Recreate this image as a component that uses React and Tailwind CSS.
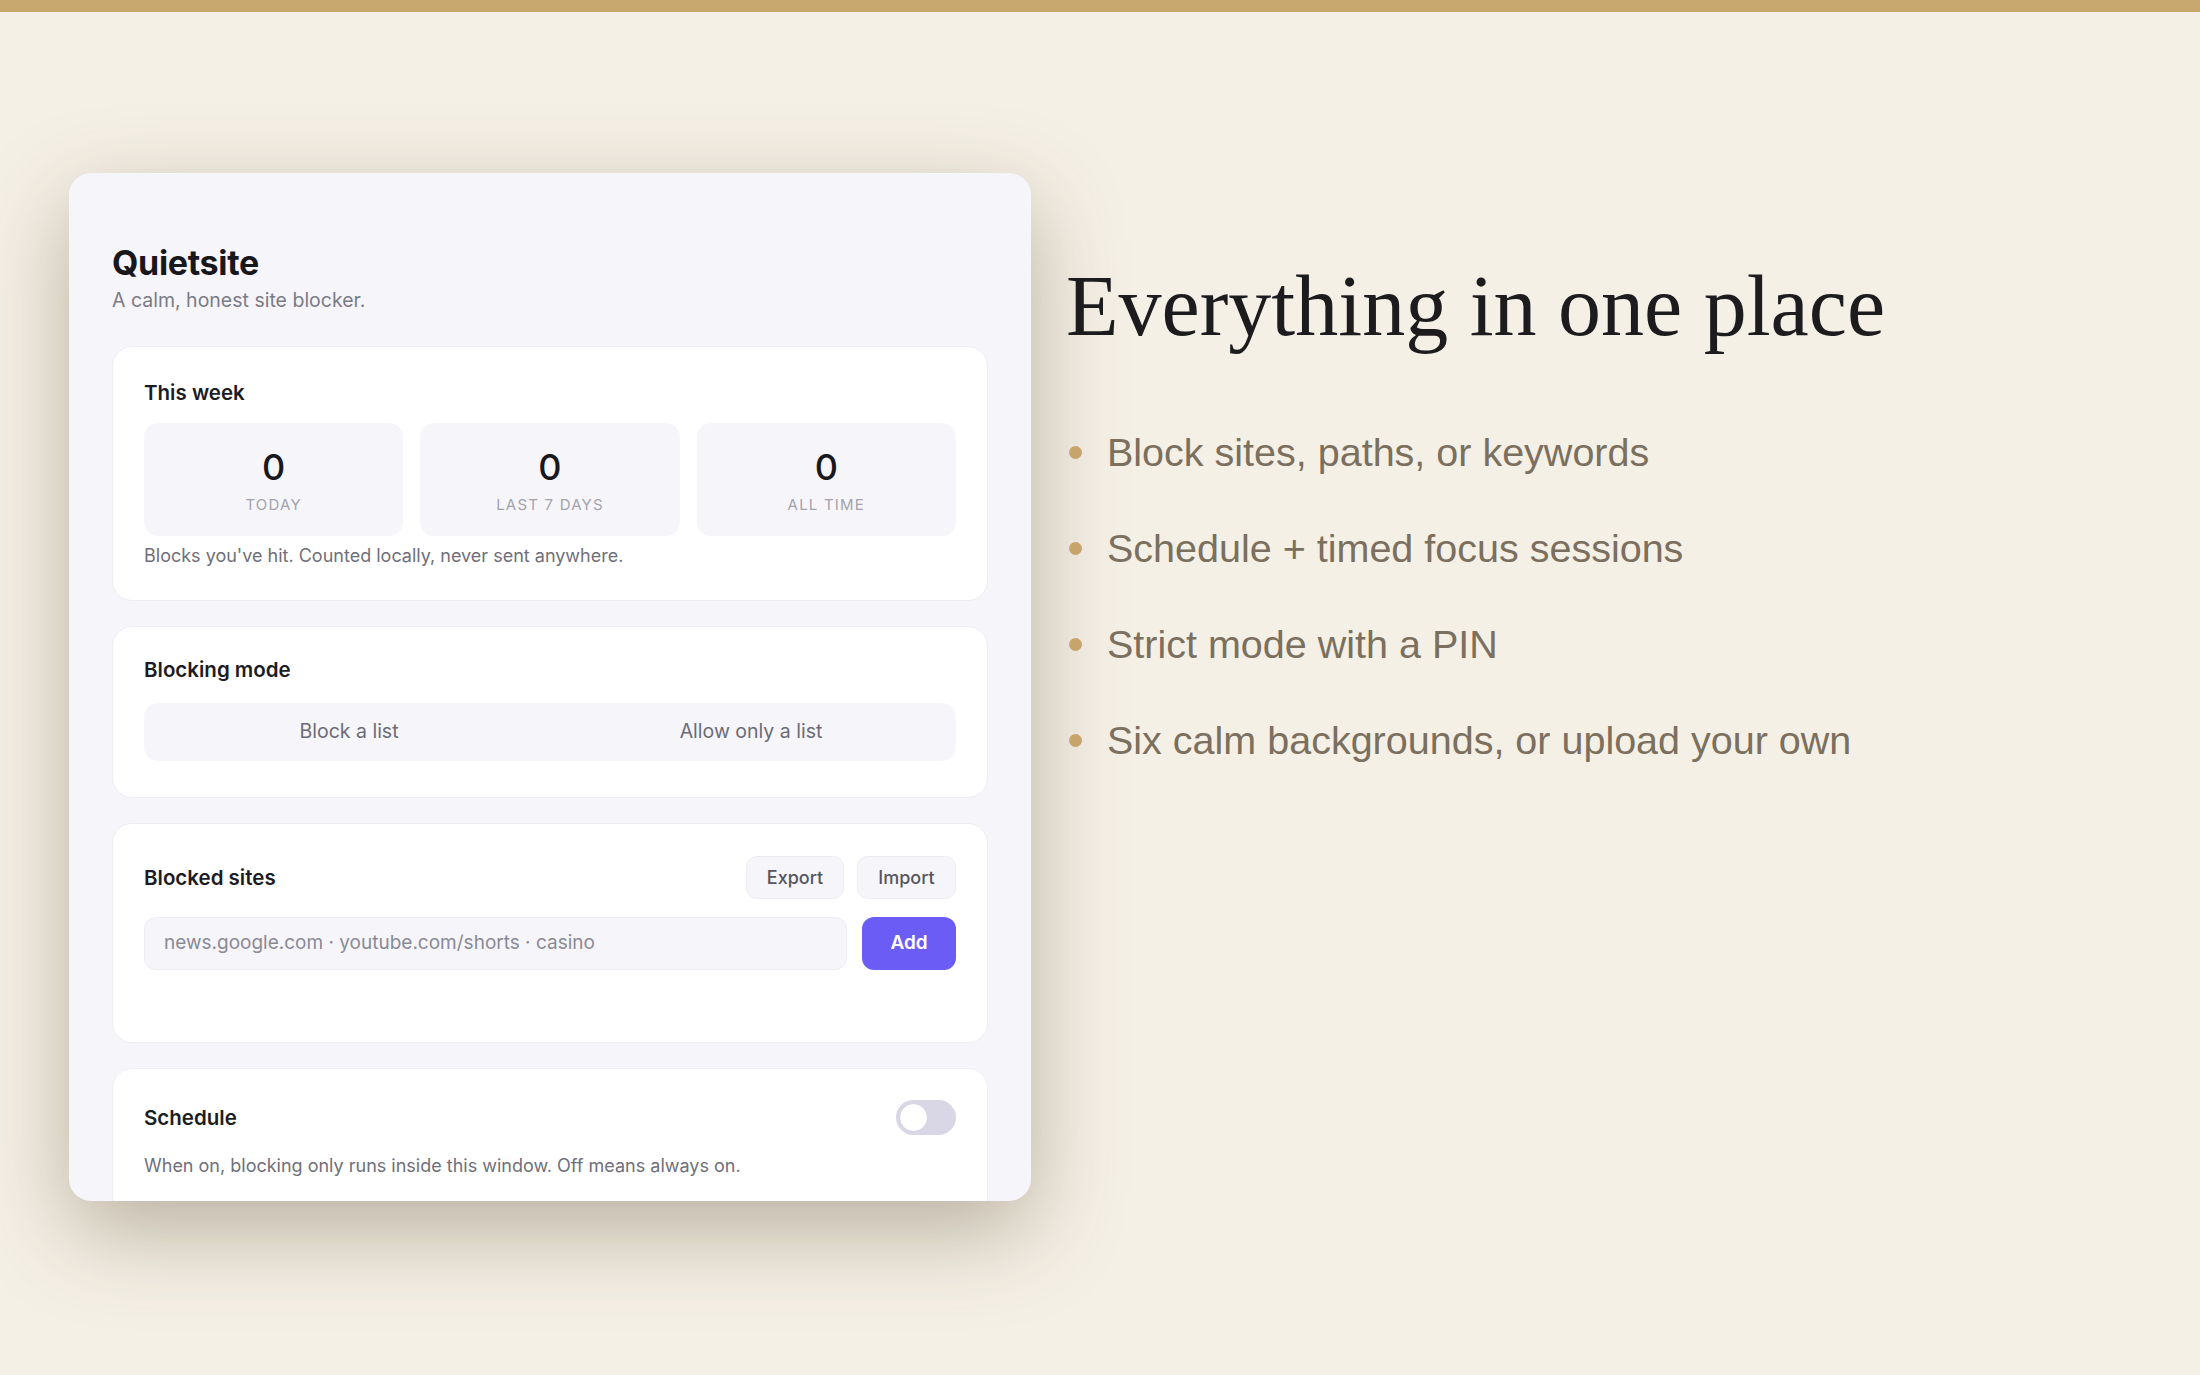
import React from "react";

const sans = { fontFamily: "Inter, 'Noto Sans', sans-serif" };

function Section({ children, className = "" }) {
  return (
    <div className={"rounded-[20px] border border-[#eeedf3] bg-white px-[31px] " + className}>
      {children}
    </div>
  );
}

function Stat({ value, label }) {
  return (
    <div className="flex h-[113px] flex-1 flex-col items-center justify-center rounded-[14px] bg-[#f6f5fa]">
      <div className="mt-[2px] text-[36px] font-medium leading-[40px] text-[#18181d]">{value}</div>
      <div className="mt-[8px] text-[15px] leading-[20px] tracking-[0.08em] text-[#a3a3ad]">{label}</div>
    </div>
  );
}

export default function App() {
  const bullets = [
    "Block sites, paths, or keywords",
    "Schedule + timed focus sessions",
    "Strict mode with a PIN",
    "Six calm backgrounds, or upload your own",
  ];
  return (
    <div className="min-h-[1375px] w-full overflow-hidden bg-[#f5f0e6]">
      <div className="h-[12px] w-full bg-[#c9a870]" />
      <div className="flex pl-[69px] pt-[161px]">
        {/* Card */}
        <div
          style={sans}
          className="flex h-[1028px] w-[962px] shrink-0 flex-col overflow-hidden rounded-[22px] bg-[#f6f5fa] px-[43px] pt-[70px] shadow-[0_30px_90px_rgba(70,52,25,0.34)]"
        >
          <div>
            <div className="text-[34px] font-bold leading-[40px] tracking-[-0.01em] text-[#17171c]">Quietsite</div>
            <div className="mt-[4px] text-[19.5px] leading-[26px] text-[#7b7b86]">A calm, honest site blocker.</div>
          </div>

          <div className="mt-[33px] flex flex-col gap-[25px]">
            <Section className="pb-[32px] pt-[34px]">
              <div className="text-[20.5px] font-semibold leading-[24px] text-[#1c1c22]">This week</div>
              <div className="mt-[18px] flex gap-[17px]">
                <Stat value="0" label="TODAY" />
                <Stat value="0" label="LAST 7 DAYS" />
                <Stat value="0" label="ALL TIME" />
              </div>
              <div className="mt-[8px] text-[18px] leading-[24px] text-[#6f6f7a]">
                Blocks you've hit. Counted locally, never sent anywhere.
              </div>
            </Section>

            <Section className="pb-[36px] pt-[31px]">
              <div className="text-[20.5px] font-semibold leading-[24px] text-[#1c1c22]">Blocking mode</div>
              <div className="mt-[21px] flex h-[58px] rounded-[14px] bg-[#f6f5fa] p-[4px]">
                <div className="flex flex-1 items-center justify-center text-[19.5px] text-[#6b6b76]">Block a list</div>
                <div className="flex flex-1 items-center justify-center text-[19.5px] text-[#6b6b76]">Allow only a list</div>
              </div>
            </Section>

            <Section className="pb-[72px] pt-[32px]">
              <div className="flex items-center justify-between">
                <div className="text-[20.5px] font-semibold leading-[24px] text-[#1c1c22]">Blocked sites</div>
                <div className="flex gap-[13px]">
                  <div className="flex h-[43px] w-[98px] items-center justify-center rounded-[11px] border border-[#ececf2] bg-[#f6f5fa] text-[18px] font-medium text-[#55555f]">
                    Export
                  </div>
                  <div className="flex h-[43px] w-[99px] items-center justify-center rounded-[11px] border border-[#ececf2] bg-[#f6f5fa] text-[18px] font-medium text-[#55555f]">
                    Import
                  </div>
                </div>
              </div>
              <div className="mt-[18px] flex gap-[15px]">
                <div className="flex h-[53px] flex-1 items-center rounded-[12px] border border-[#ececf2] bg-[#f6f5fa] pl-[19px] text-[19px] text-[#8a8a95]">
                  news.google.com · youtube.com/shorts · casino
                </div>
                <div className="flex h-[53px] w-[94px] items-center justify-center rounded-[12px] bg-[#6c5cf6] text-[19px] font-semibold text-white">
                  Add
                </div>
              </div>
            </Section>

            <Section className="pb-[40px] pt-[31px]">
              <div className="flex items-center justify-between">
                <div className="text-[20.5px] font-semibold leading-[24px] text-[#1c1c22]">Schedule</div>
                <div className="relative h-[35px] w-[60px] rounded-full bg-[#d9d7e6]">
                  <div className="absolute left-[3px] top-[3px] h-[29px] w-[29px] rounded-full border border-[#d3d1e0] bg-white" />
                </div>
              </div>
              <div className="mt-[19px] text-[18px] leading-[24px] text-[#6f6f7a]">
                When on, blocking only runs inside this window. Off means always on.
              </div>
            </Section>
          </div>
        </div>

        {/* Right column */}
        <div className="ml-[35px] mt-[90px] flex flex-col">
          <h1
            style={{ fontFamily: "'Liberation Serif', 'DejaVu Serif', serif" }}
            className="whitespace-nowrap text-[86px] font-normal leading-[86px] text-[#1c1c1e]"
          >
            Everything in one place
          </h1>
          <ul
            style={{ fontFamily: "'Liberation Sans', Arial, sans-serif" }}
            className="mt-[81px] flex flex-col gap-[52px]"
          >
            {bullets.map((b) => (
              <li key={b} className="flex h-[44px] items-center">
                <span className="ml-[3px] h-[13px] w-[13px] shrink-0 rounded-full bg-[#c8a46a]" />
                <span className="ml-[25px] whitespace-nowrap text-[39.5px] leading-[44px] text-[#7b6f5e]">{b}</span>
              </li>
            ))}
          </ul>
        </div>
      </div>
    </div>
  );
}
